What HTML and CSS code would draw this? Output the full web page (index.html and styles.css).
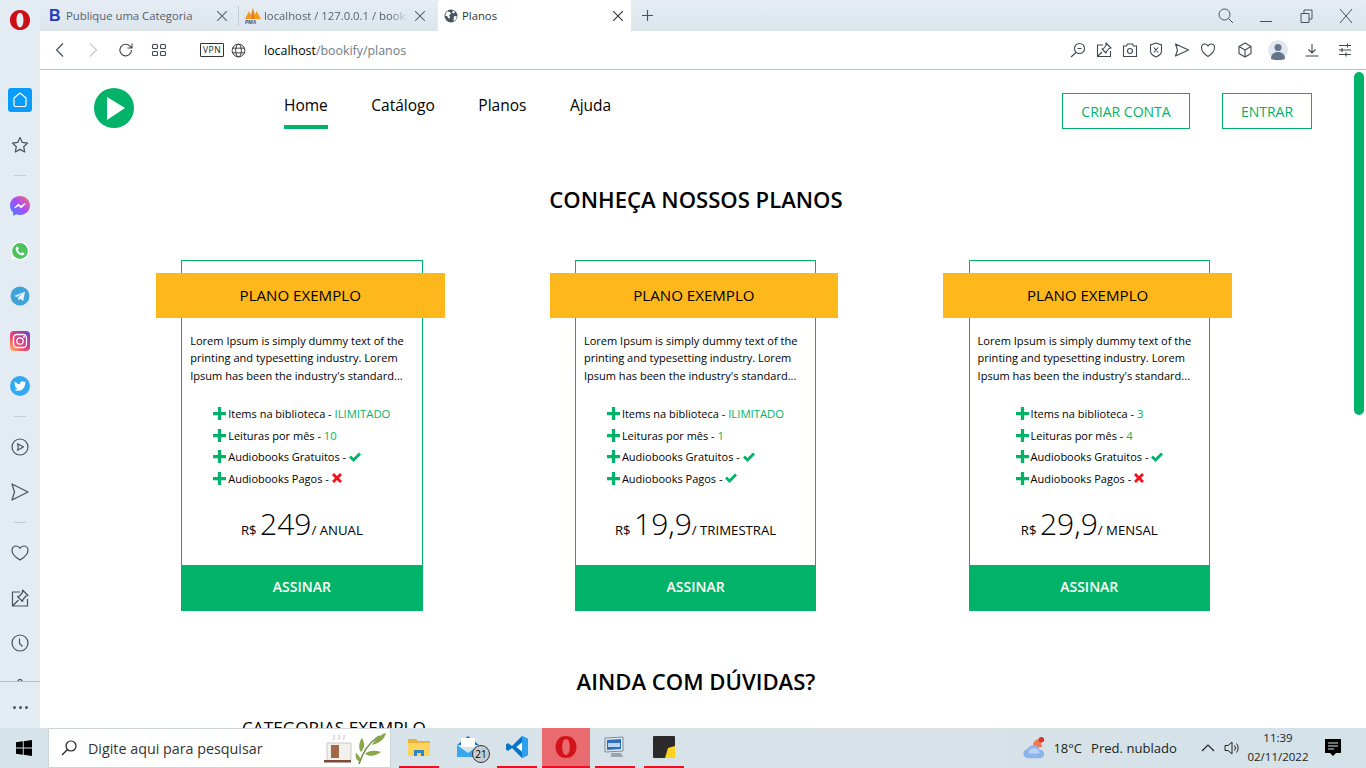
FILE: index.html
```html
<!DOCTYPE html>
<html lang="pt-BR">
<head>
<meta charset="utf-8">
<title>Planos</title>
<link rel="stylesheet" href="styles.css">
</head>
<body>
<div class="screen">
  <div class="browser">
    <aside class="rail">
      <div class="rail-top">
        <svg class="opera" viewBox="0 0 24 24"><path fill="#cc0f16" fill-rule="evenodd" d="M12 1C5.600 1 1 5.900 1 12s4.600 11 11 11 11-4.900 11-11S18.400 1 12 1zm0 3c2.400 0 3.800 3.600 3.800 8s-1.400 8-3.800 8-3.800-3.600-3.800-8S9.600 4 12 4z"/></svg>
      </div>
      <div class="rail-list">
        <div class="rail-item"><span class="home-tile"><svg class="ic18" viewBox="0 0 18 18"><path fill="none" stroke="#fff" stroke-width="1.200" stroke-linejoin="round" d="M9 2l6 5v7a1.500 1.500 0 0 1-1.500 1.500h-9A1.500 1.500 0 0 1 3 14V7z"/></svg></span></div>
        <div class="rail-item"><svg class="ic18 dark" viewBox="0 0 18 18"><path stroke-linejoin="round" d="M9 1.500l2.300 4.900 5.200.7-3.800 3.600 1 5.300L9 13.400l-4.700 2.600 1-5.300-3.800-3.600 5.200-.7z"/></svg></div>
        <div class="rail-sep"><i></i></div>
        <div class="rail-item"><svg class="ic20" viewBox="0 0 20 20"><defs><linearGradient id="ms" x1="0" y1="1" x2="1" y2="0"><stop offset="0" stop-color="#2f8dff"/><stop offset=".5" stop-color="#a64dfb"/><stop offset="1" stop-color="#ff6b6b"/></linearGradient></defs><path fill="url(#ms)" d="M10 0C4.400 0 0 4.100 0 9.500c0 2.900 1.200 5.300 3.200 7V20l3-1.700c1.200.4 2.500.6 3.800.6 5.600 0 10-4.100 10-9.400S15.600 0 10 0z"/><path fill="#fff" d="M4 12l4.300-4.600 2.400 2.300 3.800-2.300 1.500.2-4.800 4.800-2.400-2.300-3.900 2.100z"/></svg></div>
        <div class="rail-item"><svg class="ic20" viewBox="0 0 20 20"><path fill="#fff" d="M10 1a9 9 0 0 0-7.700 13.600L1 19l4.600-1.200A9 9 0 1 0 10 1z"/><circle cx="10" cy="10" r="7.900" fill="#4cc35f"/><path fill="#fff" d="M7.300 5.400c-.5 0-1.600 1-1.600 2.300 0 3 3.400 6.500 6.600 6.700 1.300 0 2.200-1 2.200-1.700 0-.5-2-1.500-2.300-1.500-.4 0-.8 1-1.200 1-.9 0-2.900-2-3-2.900 0-.5.800-.8.800-1.200 0-.4-.9-2.700-1.500-2.700z"/></svg></div>
        <div class="rail-item"><svg class="ic20" viewBox="0 0 20 20"><circle cx="10" cy="10" r="9.500" fill="#3fa3da"/><path fill="#e9f4fb" d="M4 10l11-4.300-1.800 9.300-3.200-2.300-1.700 1.700-.3-3L13 6.900 6.800 11z"/></svg></div>
        <div class="rail-item"><svg class="ic20" viewBox="0 0 20 20"><defs><linearGradient id="ig" x1="0" y1="1" x2="1" y2="0"><stop offset="0" stop-color="#fdc468"/><stop offset=".35" stop-color="#ee4f6a"/><stop offset=".7" stop-color="#b53a9f"/><stop offset="1" stop-color="#5a4fc4"/></linearGradient></defs><rect width="20" height="20" rx="4" fill="url(#ig)"/><rect x="3.500" y="3.500" width="13" height="13" rx="3.500" fill="none" stroke="#fff" stroke-width="1.300"/><circle cx="10" cy="10" r="3.200" fill="none" stroke="#fff" stroke-width="1.300"/><circle cx="14" cy="6" r=".9" fill="#fff"/></svg></div>
        <div class="rail-item"><svg class="ic20" viewBox="0 0 20 20"><circle cx="10" cy="10" r="10" fill="#32a8ef"/><path fill="#fff" d="M16 6.300c-.5.200-.9.300-1.400.4.500-.3.900-.8 1.100-1.400-.5.300-1 .5-1.600.6a2.500 2.500 0 0 0-4.200 2.300C7.900 8 6 7 4.800 5.500c-.7 1.100-.3 2.600.8 3.300-.4 0-.8-.1-1.100-.3 0 1.200.8 2.200 2 2.500-.4.100-.7.100-1.100 0 .3 1 1.300 1.700 2.300 1.700-1 .8-2.300 1.100-3.600 1 1.100.7 2.400 1.100 3.800 1.100 4.600 0 7.300-3.900 7.100-7.400.5-.2.900-.7 1-1.100z"/></svg></div>
        <div class="rail-sep"><i></i></div>
        <div class="rail-item"><svg class="ic18 dark" viewBox="0 0 18 18"><circle cx="9" cy="9" r="8"/><path stroke-linejoin="round" d="M6.500 5.800l6 3.200-6 3.200a8 8 0 0 0 0-6.400z"/></svg></div>
        <div class="rail-item"><svg class="ic18 dark" viewBox="0 0 18 18"><path stroke-linejoin="round" d="M1 1l16 8-16 8 2.500-8z"/></svg></div>
        <div class="rail-sep"><i></i></div>
        <div class="rail-item"><svg class="ic18 dark" viewBox="0 0 18 18"><path d="M9 16S1 11.200 1 6.200C1 3.500 3 2 5 2c1.800 0 3.200 1 4 2.300C9.800 3 11.200 2 13 2c2 0 4 1.500 4 4.200C17 11.200 9 16 9 16z"/></svg></div>
        <div class="rail-item"><svg class="ic18 dark" viewBox="0 0 18 18"><path d="M9 3H1.500v14h15V10M2 16.500l5.500-5.500"/><path stroke-linejoin="round" d="M11.500 1l5.500 5.500-2 .5-3 3.500-.5 2-5-5 2-.5 3-3.500z"/></svg></div>
        <div class="rail-item"><svg class="ic18 dark" viewBox="0 0 18 18"><circle cx="9" cy="9" r="8"/><path d="M8.500 4.500v5l3 3"/></svg></div>
        <div class="rail-item"><svg class="ic18 dark" viewBox="0 0 18 18"><circle cx="9" cy="2.500" r="2"/><path d="M2 4.500h14v12H2z"/></svg></div>
      </div>
      <div class="rail-foot"><i></i><i></i><i></i></div>
    </aside>
    <div class="chrome">
      <div class="tabs">
        <div class="tab tab-one">
          <span class="b-logo">B</span>
          <span class="tab-title">Publique uma Categoria</span>
          <svg class="tab-x" viewBox="0 0 10 10"><path d="M0 0l10 10M10 0L0 10"/></svg>
        </div>
        <div class="tab tab-two">
          <svg class="pma" viewBox="0 0 16 16"><path fill="#f39a1e" d="M0 11L4 3l1.500 4L8 0l2 7 1.500-4L16 11z"/><path fill="#d8761a" d="M7 11l1-11 1 11z"/><text x="0" y="16" class="pma-t">PMA</text></svg>
          <span class="tab-title tab-fade">localhost / 127.0.0.1 / bookify</span>
          <svg class="tab-x" viewBox="0 0 10 10"><path d="M0 0l10 10M10 0L0 10"/></svg>
        </div>
        <div class="tab tab-active">
          <svg class="tab-globe" viewBox="0 0 14 14"><circle cx="7" cy="7" r="6.500" fill="#4a5560"/><path fill="#fff" d="M3 2.500l3 .5 1 2-2 1 1 2-1 2-2-3-2-.5zM9 1.500l2 1.500-1 1.500-2-1zM10 7l3 .5-1.500 3.500-2 1z"/></svg>
          <span class="tab-title-active">Planos</span>
          <svg class="tab-x dark-x" viewBox="0 0 10 10"><path d="M0 0l10 10M10 0L0 10"/></svg>
        </div>
        <svg class="new-tab" viewBox="0 0 11 11"><path d="M5.500 0v11M0 5.500h11"/></svg>
        <div class="win-ctrl">
          <svg class="win-ic" viewBox="0 0 16 16"><circle cx="6.500" cy="6.500" r="5.500"/><path d="M10.500 10.500L15 15"/></svg>
          <svg class="win-ic" viewBox="0 0 16 16"><path d="M2 13.500h12"/></svg>
          <svg class="win-ic" viewBox="0 0 16 16"><path d="M3 5.500h8v9H3zM6 5.500V2h8v9h-3"/></svg>
          <svg class="win-ic" viewBox="0 0 16 16"><path d="M2 1l12 14M14 1L2 15"/></svg>
        </div>
      </div>
      <div class="toolbar">
        <div class="nav-btns">
          <svg class="tb-ic" viewBox="0 0 16 16"><path d="M11 1.500L4.500 8l6.500 6.500"/></svg>
          <svg class="tb-ic faded" viewBox="0 0 16 16"><path d="M5 1.500L11.500 8 5 14.500"/></svg>
          <svg class="tb-ic" viewBox="0 0 16 16"><path d="M13.500 8a5.800 5.800 0 1 1-1.700-4.100L14 6M14 1.500V6H9.500"/></svg>
          <svg class="tb-ic" viewBox="0 0 16 16"><rect x="1.500" y="2.500" width="5" height="4" rx="1"/><rect x="9.500" y="2.500" width="5" height="4" rx="1"/><rect x="1.500" y="9.500" width="5" height="4" rx="1"/><rect x="9.500" y="9.500" width="5" height="4" rx="1"/></svg>
        </div>
        <span class="vpn">VPN</span>
        <svg class="tb-globe" viewBox="0 0 16 16"><circle cx="8" cy="8" r="6.800"/><ellipse cx="8" cy="8" rx="3" ry="6.800"/><path d="M1.500 5.500h13M1.500 10.500h13"/></svg>
        <div class="url"><span class="url-host">localhost</span>/bookify/planos</div>
        <div class="tb-right">
          <svg class="tb-ic" viewBox="0 0 16 16"><circle cx="9.500" cy="6.500" r="5"/><path d="M6 10.500L1 15M7.500 6.500h4"/></svg>
          <svg class="tb-ic" viewBox="0 0 16 16"><path d="M7 3H1.500v11.500h13V9M2 14l4-4"/><path stroke-linejoin="round" d="M10 1l5 5-2 .5-2.500 3-.5 1.500-4-4 1.500-.5 2.500-3z"/></svg>
          <svg class="tb-ic" viewBox="0 0 16 16"><path d="M1.500 4h3l1-2h5l1 2h3v10.500h-13z"/><circle cx="8" cy="9" r="2.500"/></svg>
          <svg class="tb-ic" viewBox="0 0 16 16"><path d="M8 1l5.500 2v6c0 3-3 5-5.500 6-2.500-1-5.500-3-5.500-6V3zM5.800 5.500l4.400 5M10.200 5.500l-4.400 5"/></svg>
          <svg class="tb-ic" viewBox="0 0 16 16"><path stroke-linejoin="round" d="M1.500 2l13 6-13 6 2-6z"/></svg>
          <svg class="tb-ic" viewBox="0 0 16 16"><path d="M8 14.500S1.500 10.500 1.500 5.500C1.500 3.200 3 2 4.800 2 6.200 2 7.400 3 8 4c.6-1 1.800-2 3.200-2C13 2 14.500 3.200 14.500 5.500c0 5-6.500 9-6.500 9z"/></svg>
          <svg class="tb-ic cube" viewBox="0 0 16 16"><path stroke-linejoin="round" d="M8 1l6 3.500v7L8 15l-6-3.500v-7zM2 4.500L8 8l6-3.500M8 8v7"/></svg>
          <svg class="avatar" viewBox="0 0 20 20"><circle cx="10" cy="10" r="10" fill="#e0e7ef"/><circle cx="10" cy="7.500" r="3.500" fill="#64748a"/><path fill="#64748a" d="M3 19c0-5 3-7 7-7s7 2 7 7c-2 1.500-12 1.500-14 0z"/></svg>
          <svg class="tb-ic after-avatar" viewBox="0 0 16 16"><path d="M8 2v8.500M4.500 7.500L8 11l3.500-3.500M1.500 14h13"/></svg>
          <svg class="tb-ic last-ic" viewBox="0 0 16 16"><path d="M2 3.500h12M2 8h12M2 12.500h12M10.500 1.500v4M5 6v4M9 10.500v4"/></svg>
        </div>
      </div>
      <main class="page">
        <header class="site-head">
          <svg class="logo" viewBox="0 0 40 40"><circle cx="20" cy="20" r="20" fill="#00b368"/><path fill="#fff" d="M13 9l18 11-18 12z"/></svg>
          <nav class="site-nav">
            <a class="nav-link is-active">Home</a>
            <a class="nav-link">Catálogo</a>
            <a class="nav-link">Planos</a>
            <a class="nav-link">Ajuda</a>
          </nav>
          <div class="site-actions">
            <a class="outline-btn btn-wide">CRIAR CONTA</a>
            <a class="outline-btn btn-narrow">ENTRAR</a>
          </div>
        </header>
        <h1 class="title title-plans">CONHEÇA NOSSOS PLANOS</h1>
        <section class="plans">
          <article class="plan">
            <h2 class="plan-name">PLANO EXEMPLO</h2>
            <p class="plan-text">Lorem Ipsum is simply dummy text of the printing and typesetting industry. Lorem Ipsum has been the industry's standard...</p>
            <ul class="perks">
              <li class="perk"><svg class="plus" viewBox="0 0 12 12"><path d="M4.500 0h3v4.500H12v3H7.500V12h-3V7.500H0v-3h4.500z"/></svg>Items na biblioteca - <b class="val">ILIMITADO</b></li>
              <li class="perk"><svg class="plus" viewBox="0 0 12 12"><path d="M4.500 0h3v4.500H12v3H7.500V12h-3V7.500H0v-3h4.500z"/></svg>Leituras por mês - <b class="val">10</b></li>
              <li class="perk"><svg class="plus" viewBox="0 0 12 12"><path d="M4.500 0h3v4.500H12v3H7.500V12h-3V7.500H0v-3h4.500z"/></svg>Audiobooks Gratuitos - <svg class="yes" viewBox="0 0 12 10"><path d="M0 5.500L2 3.500 4.500 6 10 0.500 12 2.500 4.500 10z"/></svg></li>
              <li class="perk"><svg class="plus" viewBox="0 0 12 12"><path d="M4.500 0h3v4.500H12v3H7.500V12h-3V7.500H0v-3h4.500z"/></svg>Audiobooks Pagos - <svg class="no" viewBox="0 0 10 10"><path d="M2 0l3 3 3-3 2 2-3 3 3 3-2 2-3-3-3 3-2-2 3-3-3-3z"/></svg></li>
            </ul>
            <div class="price"><span class="cur">R$</span> <span class="amount">249</span><span class="per">/ ANUAL</span></div>
            <a class="subscribe">ASSINAR</a>
          </article>
          <article class="plan">
            <h2 class="plan-name">PLANO EXEMPLO</h2>
            <p class="plan-text">Lorem Ipsum is simply dummy text of the printing and typesetting industry. Lorem Ipsum has been the industry's standard...</p>
            <ul class="perks">
              <li class="perk"><svg class="plus" viewBox="0 0 12 12"><path d="M4.500 0h3v4.500H12v3H7.500V12h-3V7.500H0v-3h4.500z"/></svg>Items na biblioteca - <b class="val">ILIMITADO</b></li>
              <li class="perk"><svg class="plus" viewBox="0 0 12 12"><path d="M4.500 0h3v4.500H12v3H7.500V12h-3V7.500H0v-3h4.500z"/></svg>Leituras por mês - <b class="val">1</b></li>
              <li class="perk"><svg class="plus" viewBox="0 0 12 12"><path d="M4.500 0h3v4.500H12v3H7.500V12h-3V7.500H0v-3h4.500z"/></svg>Audiobooks Gratuitos - <svg class="yes" viewBox="0 0 12 10"><path d="M0 5.500L2 3.500 4.500 6 10 0.500 12 2.500 4.500 10z"/></svg></li>
              <li class="perk"><svg class="plus" viewBox="0 0 12 12"><path d="M4.500 0h3v4.500H12v3H7.500V12h-3V7.500H0v-3h4.500z"/></svg>Audiobooks Pagos - <svg class="yes" viewBox="0 0 12 10"><path d="M0 5.500L2 3.500 4.500 6 10 0.500 12 2.500 4.500 10z"/></svg></li>
            </ul>
            <div class="price"><span class="cur">R$</span> <span class="amount">19,9</span><span class="per">/ TRIMESTRAL</span></div>
            <a class="subscribe">ASSINAR</a>
          </article>
          <article class="plan">
            <h2 class="plan-name">PLANO EXEMPLO</h2>
            <p class="plan-text">Lorem Ipsum is simply dummy text of the printing and typesetting industry. Lorem Ipsum has been the industry's standard...</p>
            <ul class="perks perks-alt">
              <li class="perk"><svg class="plus" viewBox="0 0 12 12"><path d="M4.500 0h3v4.500H12v3H7.500V12h-3V7.500H0v-3h4.500z"/></svg>Items na biblioteca - <b class="val">3</b></li>
              <li class="perk"><svg class="plus" viewBox="0 0 12 12"><path d="M4.500 0h3v4.500H12v3H7.500V12h-3V7.500H0v-3h4.500z"/></svg>Leituras por mês - <b class="val">4</b></li>
              <li class="perk"><svg class="plus" viewBox="0 0 12 12"><path d="M4.500 0h3v4.500H12v3H7.500V12h-3V7.500H0v-3h4.500z"/></svg>Audiobooks Gratuitos - <svg class="yes" viewBox="0 0 12 10"><path d="M0 5.500L2 3.500 4.500 6 10 0.500 12 2.500 4.500 10z"/></svg></li>
              <li class="perk"><svg class="plus" viewBox="0 0 12 12"><path d="M4.500 0h3v4.500H12v3H7.500V12h-3V7.500H0v-3h4.500z"/></svg>Audiobooks Pagos - <svg class="no" viewBox="0 0 10 10"><path d="M2 0l3 3 3-3 2 2-3 3 3 3-2 2-3-3-3 3-2-2 3-3-3-3z"/></svg></li>
            </ul>
            <div class="price"><span class="cur">R$</span> <span class="amount">29,9</span><span class="per">/ MENSAL</span></div>
            <a class="subscribe">ASSINAR</a>
          </article>
        </section>
        <h1 class="title title-faq">AINDA COM DÚVIDAS?</h1>
        <p class="faq-cat">CATEGORIAS EXEMPLO</p>
        <div class="scroll-thumb"></div>
      </main>
    </div>
  </div>
  <footer class="taskbar">
    <svg class="start" viewBox="0 0 16 16"><path fill="#000" d="M0 2.300L6.800 1.300V7.500H0zM7.700 1.200L16 0v7.500H7.700zM0 8.400h6.800v6.300L0 13.700zM7.700 8.400H16V16l-8.300-1.200z"/></svg>
    <div class="search">
      <svg class="search-ic" viewBox="0 0 16 16"><circle cx="10" cy="6" r="5"/><path d="M6.500 9.500L1 15"/></svg>
      <span class="search-text">Digite aqui para pesquisar</span>
      <svg class="doodle" viewBox="0 0 63 32"><path fill="#f3f1ee" stroke="#cfc7c0" d="M3 11h24v15c0 2-2 3-4 3H7c-2 0-4-1-4-3z"/><rect x="7" y="13" width="8" height="13" fill="#a06a48"/><rect y="28" width="27" height="2.500" fill="#7a4a3a"/><path fill="none" stroke="#bbb" d="M10 8c-1-2 1-3 0-5M15 8c-1-2 1-3 0-5M20 8c-1-2 1-3 0-5"/><path fill="none" stroke="#6a8a3a" stroke-width="1.500" d="M35 32c3-10 8-20 20-28"/><path fill="#8aa84a" d="M62 1c-2 8-8 10-14 12 3-6 7-10 14-12zM37 20c-3-4-2-10 1-14 3 5 3 10-1 14zM41 22c4-4 10-4 16-2-5 4-11 5-16 2zM36 30c-4-2-5-5-4-9 3 2 5 5 4 9z"/></svg>
    </div>
    <div class="task-apps">
      <div class="app app-run"><svg class="ic22" viewBox="0 0 22 22"><path fill="#e8b23c" d="M0 3h8l2 2h12v15H0z"/><path fill="#ffd45e" d="M0 7h22v13H0z"/><path fill="#2d88c9" d="M6 14h10v6h-3v-3H9v3H6z"/></svg></div>
      <div class="app app-mail"><svg class="ic24" viewBox="0 0 24 24"><path fill="#1e78c8" d="M12 1L1 10h22z"/><rect x="5" y="3" width="14" height="9" fill="#fff"/><path fill="#39a6f0" d="M1 10l11 8 11-8v12H1z"/></svg><span class="badge">21</span></div>
      <div class="app app-run"><svg class="ic24" viewBox="0 0 24 24"><path fill="#0a74c4" d="M17 1l6 3v16l-6 3-10-10-4 3-2-1.500V9.500L3 8l4 3z"/><path fill="#2ea0ee" d="M17 1l6 3v16l-6 3zM17 7l-6 5 6 5z"/><path fill="#fff" d="M17 7.500L11.500 12l5.500 4.500z"/></svg></div>
      <div class="app app-on"><svg class="ic24" viewBox="0 0 24 24"><path fill="#d3131c" fill-rule="evenodd" d="M12 1C5.600 1 1.500 5.900 1.500 12S5.600 23 12 23s10.500-4.900 10.500-11S18.400 1 12 1zm0 3c2.500 0 3.800 3.600 3.800 8s-1.300 8-3.800 8-3.800-3.600-3.800-8S9.500 4 12 4z"/></svg></div>
      <div class="app app-run app-pc"><svg class="ic24" viewBox="0 0 24 24"><path fill="#dfe7ef" stroke="#7b8a9a" d="M2 3l18-1v14L2 17z"/><path fill="#2d6fb8" d="M4 5l14-1v10L4 15z"/><path fill="#bcd4ee" d="M5 8h12v4H5z"/><path fill="#9aa4ae" d="M8 18h10l2 4H8z"/></svg></div>
      <div class="app app-run app-note"><svg class="ic24" viewBox="0 0 24 24"><rect x="1" y="1" width="22" height="22" rx="1" fill="#2b2b2b"/><path fill="#ffd21f" d="M23 11v12h-10l3-10z"/></svg></div>
    </div>
    <div class="tray">
      <svg class="weather" viewBox="0 0 26 26"><path fill="#ef7a55" d="M12 9a6 6 0 0 1 8-5l2 8-8 1z"/><circle cx="21" cy="4" r="3" fill="#d9342b"/><path fill="#8db4ea" d="M7 24a5 5 0 0 1-1-10 7 7 0 0 1 13 1 4.500 4.500 0 0 1 1 9z"/><path fill="#b9d2f5" d="M7 19a5 5 0 0 1 12 0z"/></svg>
      <span class="temp">18°C</span>
      <span class="cond">Pred. nublado</span>
      <svg class="caret" viewBox="0 0 14 8"><path d="M1 7l6-6 6 6"/></svg>
      <svg class="speaker" viewBox="0 0 16 16"><path d="M1 5.500h3L8 2v12l-4-3.500H1zM10.500 5.500a4 4 0 0 1 0 5M12.500 3.500a7 7 0 0 1 0 9"/></svg>
      <div class="clock"><span>11:39</span><span>02/11/2022</span></div>
      <svg class="notify" viewBox="0 0 16 18"><path d="M0 0h16v14h-5l-3 3-3-3H0z"/><path stroke="#d7e4ea" stroke-width="1.200" d="M3 4h10M3 7h10M3 10h6"/></svg>
    </div>
  </footer>
</div>
</body>
</html>
```

FILE: styles.css
```css
* { box-sizing: border-box; }
html, body { margin: 0; padding: 0; }
body { width: 1366px; height: 768px; overflow: hidden; font-family: "Open Sans", "Noto Sans", sans-serif; color: #000; background: #fff; }
svg { display: block; flex: none; }

.screen { display: flex; flex-direction: column; height: 768px; }
.browser { display: flex; height: 728px; }

/* Rail */
.rail { width: 40px; background: #e4ecf3; display: flex; flex-direction: column; flex: none; }
.rail-top { height: 77.5px; padding: 9px 0 0 9px; flex: none; }
.opera { width: 22px; height: 22px; }
.rail-list { flex: 1; overflow: hidden; }
.rail-item { height: 45px; display: flex; align-items: center; justify-content: center; }
.rail-sep { height: 16px; display: flex; align-items: center; justify-content: center; }
.rail-sep i { width: 12px; height: 1px; background: #c3ccd4; display: block; }
.rail-foot { height: 47px; border-top: 1px solid #b5bcc3; flex: none; display: flex; align-items: center; justify-content: center; gap: 3px; padding-top: 5px; }
.rail-foot i { width: 3px; height: 3px; border-radius: 50%; background: #4a5560; display: block; }
.home-tile { width: 24px; height: 24px; background: #0a9bff; border-radius: 3px; display: flex; align-items: center; justify-content: center; }
.ic18 { width: 18px; height: 18px; }
.ic20 { width: 20px; height: 20px; }
.dark { fill: none; stroke: #48525c; stroke-width: 1.200; }

.chrome { flex: 1; display: flex; flex-direction: column; min-width: 0; }

/* Tabs */
.tabs { height: 31px; flex: none; display: flex; align-items: center; background: linear-gradient(#e6edf4, #dce5ec); padding-left: 8px; }
.tab { height: 31px; display: flex; align-items: center; flex: none; font-size: 11.300px; color: #56616c; }
.tab-one { width: 190px; }
.tab-two { width: 200px; padding-left: 6px; border-left: 1px solid #c4ccd4; height: 20px; }
.tab-active { width: 193px; height: 31px; background: #fff; border-radius: 3px 3px 0 0; color: #333; padding-left: 6px; }
.b-logo { width: 12px; margin-left: 1px; font: bold 16px/1 "Liberation Sans", sans-serif; color: #2438c4; }
.tab-title { margin-left: 5px; white-space: nowrap; overflow: hidden; }
.tab-one .tab-title { width: 148px; }
.tab-two .tab-title { width: 143px; margin-left: 3px; }
.tab-fade { -webkit-mask-image: linear-gradient(90deg, #000 88%, transparent); mask-image: linear-gradient(90deg, #000 88%, transparent); }
.pma { width: 16px; height: 16px; }
.pma-t { font: italic bold 5px "Liberation Sans", sans-serif; fill: #3a4a7a; }
.tab-x { width: 10px; height: 10px; stroke: #5a646e; stroke-width: 1.100; fill: none; }
.tab-one .tab-x { margin-left: 3px; }
.tab-two .tab-x { margin-left: 8px; }
.tab-globe { width: 14px; height: 14px; }
.tab-title-active { margin-left: 4px; width: 151px; }
.dark-x { stroke: #333; }
.new-tab { width: 11px; height: 11px; stroke: #4a5560; stroke-width: 1.200; margin-left: 11px; }
.win-ctrl { margin-left: auto; display: flex; gap: 24px; padding-right: 12px; }
.win-ic { width: 16px; height: 16px; fill: none; stroke: #48525c; stroke-width: 1; }

/* Toolbar */
.toolbar { height: 39px; flex: none; background: #fff; border-bottom: 1px solid #b8bfc5; display: flex; align-items: center; padding-left: 12px; }
.nav-btns { display: flex; gap: 17px; width: 148px; }
.tb-ic { width: 16px; height: 16px; fill: none; stroke: #3f4852; stroke-width: 1.100; }
.faded { stroke: #c3c9cf; }
.vpn { width: 24px; height: 14px; border: 1px solid #333; border-radius: 1px; font-size: 8.500px; line-height: 12px; text-align: center; letter-spacing: .5px; color: #222; }
.tb-globe { width: 15px; height: 15px; fill: none; stroke: #333; stroke-width: 1; margin-left: 7px; }
.url { margin-left: 18px; font-size: 12.400px; color: #6f7b86; }
.url-host { color: #000; }
.tb-right { margin-left: auto; display: flex; align-items: center; gap: 10px; padding-right: 13px; }
.cube { margin-left: 11px; }
.avatar { width: 20px; height: 20px; margin-left: 5px; }
.after-avatar { margin-left: 6px; }
.last-ic { margin-left: 7px; }

/* Page */
.page { flex: 1; position: relative; overflow: hidden; background: #fff; }
.site-head { display: flex; height: 60px; padding-left: 54px; }
.logo { width: 40px; height: 40px; margin-top: 18px; }
.site-nav { display: flex; gap: 43.500px; margin-left: 150px; }
.nav-link { display: block; height: 59px; padding-top: 23px; font-size: 15.500px; line-height: 24px; border-bottom: 4px solid transparent; color: #000; }
.is-active { border-bottom-color: #00b368; }
.site-actions { margin-left: auto; display: flex; gap: 32px; padding: 23px 54px 0 0; }
.outline-btn { height: 36px; border: 1px solid #00b368; color: #00b368; font-size: 14px; line-height: 36px; text-align: center; display: block; }
.btn-wide { width: 128px; }
.btn-narrow { width: 90px; }

.title { margin: 0; padding-right: 14px; text-align: center; font-size: 22.100px; font-weight: 600; line-height: 30px; }
.title-plans { margin: 54px 0 0; }
.plans { display: flex; gap: 152.300px; margin: 46px 0 0 141.200px; }
.plan { width: 241.400px; height: 351px; border: 1px solid #00b368; display: flex; flex-direction: column; padding-top: 12px; }
.plan-name { margin: 0 -23px 0 -26.300px; height: 45px; background: #ffb81c; font-size: 15.100px; font-weight: 500; line-height: 45px; text-align: center; flex: none; }
.plan-text { margin: 13.700px 8px 0; font-size: 11.050px; line-height: 17.600px; }
.perks { list-style: none; margin: 18.300px 0 0; padding: 0 0 0 31px; }
.perks-alt { padding-left: 46px; }
.perk { display: flex; align-items: center; height: 21.600px; font-size: 11px; white-space: pre; }
.plus { width: 13px; height: 13px; fill: #00b368; margin-right: 2px; }
.val { font-size: 11.300px; font-weight: 500; color: #00b368; }
.yes { width: 12px; height: 10px; fill: #00b368; }
.no { width: 10px; height: 10px; fill: #f0101c; }
.price { text-align: center; margin-top: 13px; font-size: 13.200px; line-height: 44px; height: 44px; white-space: nowrap; }
.amount { font-size: 30px; font-weight: 300; }
.per { font-size: 13.200px; }
.subscribe { margin: auto -1px -1px; height: 46px; background: #00b368; color: #fff; font-size: 14px; font-weight: 600; line-height: 44px; text-align: center; display: block; flex: none; }

.title-faq { margin: 55px 0 0; }
.faq-cat { margin: 21px 0 0 202px; font-size: 17.200px; line-height: 22px; }
.scroll-thumb { position: absolute; top: 2px; right: 2px; width: 10px; height: 343px; background: #00b368; border-radius: 5px; }

/* Taskbar */
.taskbar { height: 40px; flex: none; background: linear-gradient(90deg, #d6e4ea, #d8e2e8 70%, #d3e2e9); display: flex; align-items: center; }
.start { width: 16px; height: 16px; margin-left: 16px; }
.search { width: 343px; height: 40px; margin-left: 16px; background: #fff; border: 1px solid #cdd3d6; display: flex; align-items: center; padding-left: 12px; }
.search-ic { width: 16px; height: 16px; fill: none; stroke: #222; stroke-width: 1.200; }
.search-text { margin-left: 11px; font-size: 14.300px; color: #333; }
.doodle { width: 63px; height: 32px; margin-left: auto; margin-right: 3px; }
.task-apps { display: flex; margin-left: 8px; }
.app { width: 40px; height: 40px; display: flex; align-items: center; justify-content: center; position: relative; border-bottom: 2px solid transparent; flex: none; }
.app-run { border-bottom-color: #e81123; }
.app-mail { margin: 0 7px 0 11px; justify-content: flex-start; padding-left: 6px; }
.app-on { width: 48px; margin-left: 5px; background: #e96a6f; border-bottom-color: #e81123; }
.app-pc { margin-left: 5px; }
.app-note { margin-left: 9px; }
.ic22 { width: 22px; height: 22px; }
.ic24 { width: 24px; height: 24px; }
.badge { position: absolute; right: 0; bottom: 3px; width: 18px; height: 18px; border-radius: 50%; background: #c7ced3; border: 1px solid #333; font-size: 10px; line-height: 16px; text-align: center; }
.tray { margin-left: auto; display: flex; align-items: center; padding-right: 25px; }
.weather { width: 24px; height: 24px; }
.temp { margin-left: 7px; font-size: 13px; color: #222; }
.cond { margin-left: 9px; font-size: 13.100px; color: #222; }
.caret { width: 14px; height: 8px; fill: none; stroke: #222; stroke-width: 1.200; margin-left: 24px; }
.speaker { width: 16px; height: 16px; fill: none; stroke: #222; stroke-width: 1; margin-left: 9px; }
.clock { width: 66px; margin-left: 5px; padding-bottom: 2px; display: flex; flex-direction: column; align-items: center; font-size: 11.500px; line-height: 19px; color: #222; }
.notify { width: 16px; height: 18px; fill: #000; margin-left: 14px; }
```
